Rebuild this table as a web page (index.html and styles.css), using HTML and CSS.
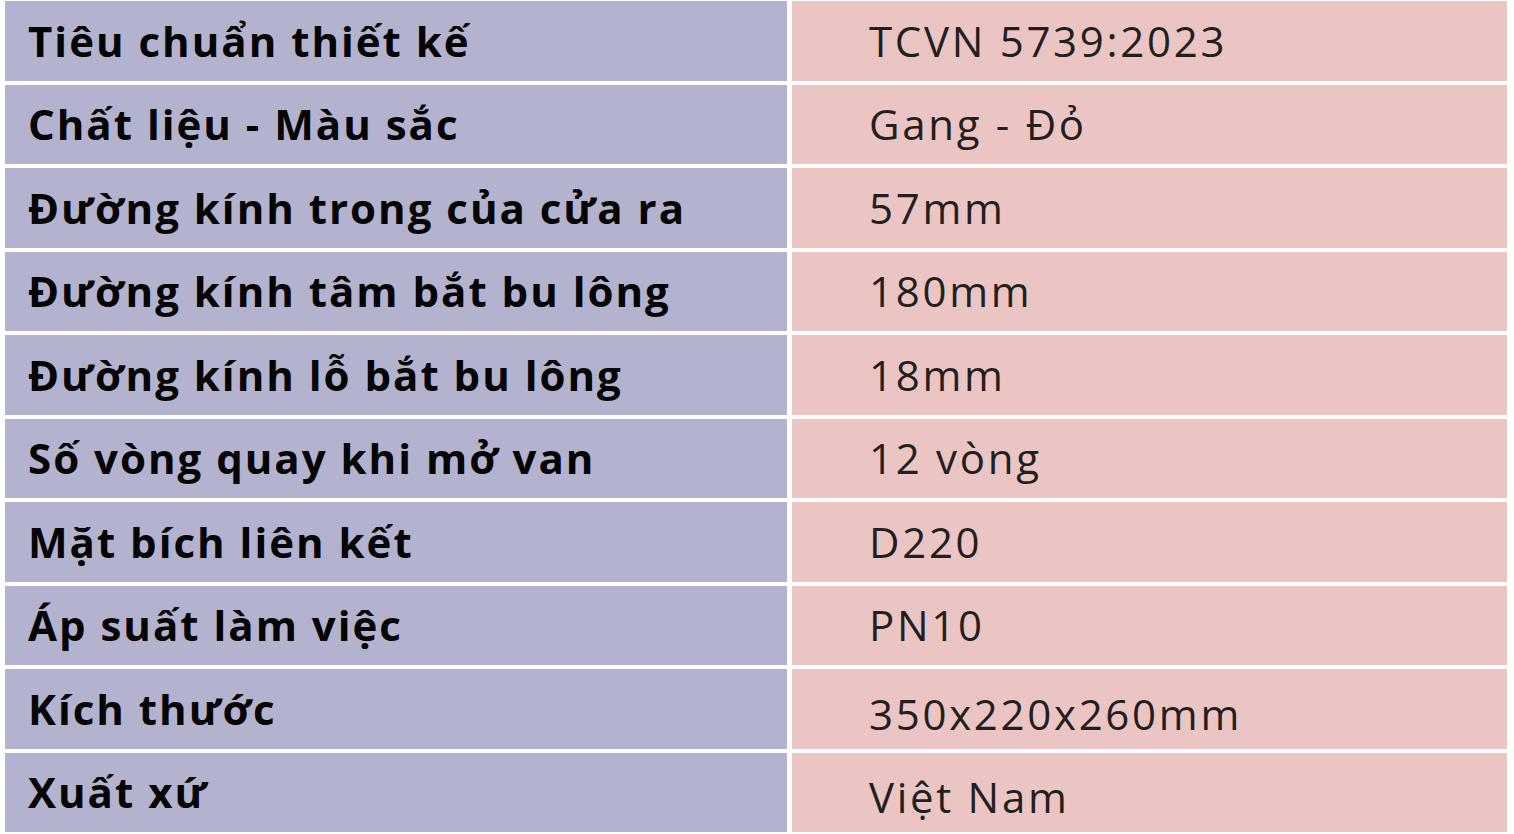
FILE: index.html
```html
<!DOCTYPE html>
<html lang="vi">
<head>
<meta charset="utf-8">
<title>Thông số kỹ thuật</title>
<link rel="stylesheet" href="styles.css">
</head>
<body>
<div class="spec">
  <div class="cell key">Tiêu chuẩn thiết kế</div>
  <div class="cell val">TCVN 5739:2023</div>
  <div class="cell key">Chất liệu - Màu sắc</div>
  <div class="cell val">Gang - Đỏ</div>
  <div class="cell key">Đường kính trong của cửa ra</div>
  <div class="cell val">57mm</div>
  <div class="cell key">Đường kính tâm bắt bu lông</div>
  <div class="cell val">180mm</div>
  <div class="cell key">Đường kính lỗ bắt bu lông</div>
  <div class="cell val">18mm</div>
  <div class="cell key">Số vòng quay khi mở van</div>
  <div class="cell val">12 vòng</div>
  <div class="cell key">Mặt bích liên kết</div>
  <div class="cell val">D220</div>
  <div class="cell key">Áp suất làm việc</div>
  <div class="cell val">PN10</div>
  <div class="cell key">Kích thước</div>
  <div class="cell val low">350x220x260mm</div>
  <div class="cell key">Xuất xứ</div>
  <div class="cell val low">Việt Nam</div>
</div>
</body>
</html>
```

FILE: styles.css
```css
html, body {
  margin: 0;
  padding: 0;
  background: #ffffff;
}

body {
  padding: 1px 7px 2px 5px;
  font-family: "Open Sans", "Liberation Sans", sans-serif;
}

.spec {
  display: grid;
  grid-template-columns: 782px 715px;
  grid-auto-rows: 79.5px;
  column-gap: 5px;
  row-gap: 4px;
}

.cell {
  display: flex;
  align-items: center;
  font-size: 42px;
  line-height: 1;
  white-space: nowrap;
}

.key {
  background: #b3b3d0;
  color: #050505;
  font-weight: 700;
  letter-spacing: 2px;
  padding-left: 23px;
}

.val {
  background: #ebc5c4;
  color: #231f20;
  font-weight: 400;
  letter-spacing: 2.7px;
  padding-left: 77px;
}

.val.low {
  padding-top: 10px;
}
```
